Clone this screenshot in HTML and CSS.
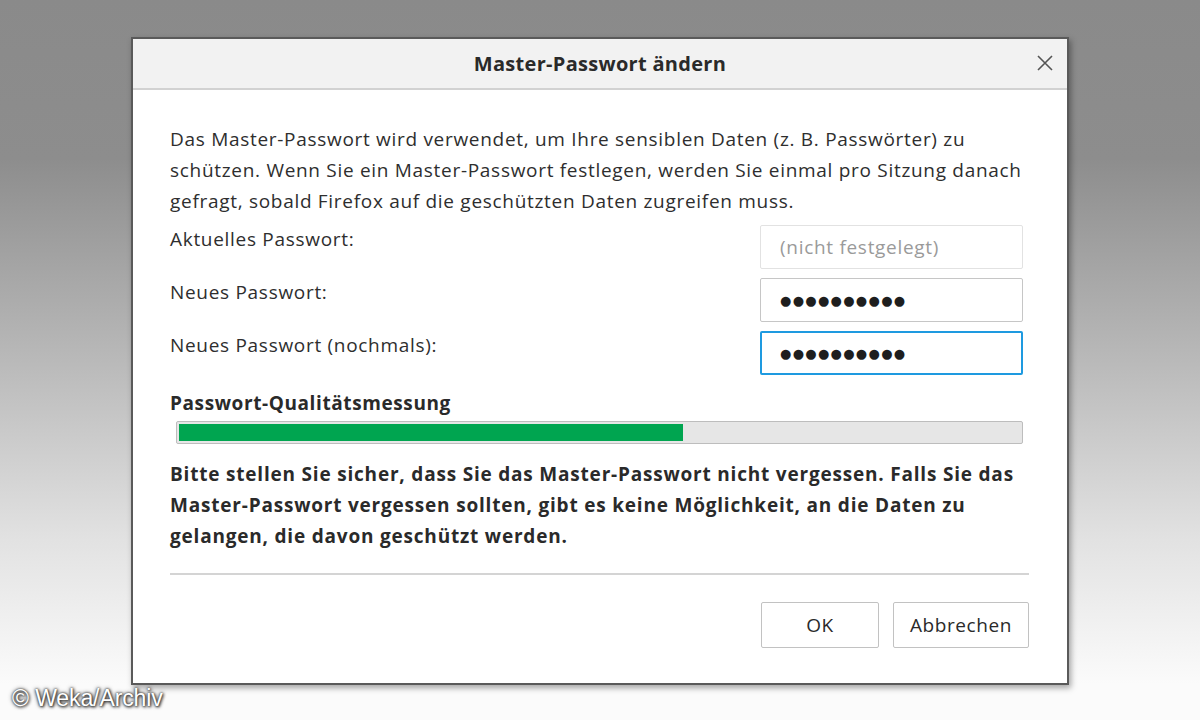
FILE: index.html
```
<!DOCTYPE html>
<html lang="de">
<head>
    <meta charset="UTF-8">
    <title>Master-Passwort ändern</title>
    <link rel="stylesheet" href="styles.css">
</head>
<body>
    <div class="dialog">
        <div class="titlebar">
            <h1>Master-Passwort ändern</h1>
            <span class="close">
                <svg width="18" height="18" viewBox="0 0 18 18"><path d="M2 2 L16 16 M16 2 L2 16" stroke="#555" stroke-width="1.6" fill="none"/></svg>
            </span>
        </div>

        <div class="content">
            <p class="intro">Das Master-Passwort wird verwendet, um Ihre sensiblen Daten (z. B. Passwörter) zu<br>schützen. Wenn Sie ein Master-Passwort festlegen, werden Sie einmal pro Sitzung danach<br>gefragt, sobald Firefox auf die geschützten Daten zugreifen muss.</p>

            <div class="fields">
                <label>Aktuelles Passwort:</label>
                <div class="field disabled">(nicht festgelegt)</div>
                <label>Neues Passwort:</label>
                <div class="field dots">●●●●●●●●●●</div>
                <label>Neues Passwort (nochmals):</label>
                <div class="field dots focused">●●●●●●●●●●</div>
            </div>

            <h2>Passwort-Qualitätsmessung</h2>
            <div class="meter"><div class="meter-fill" style="width: 59.9%"></div></div>

            <p class="warning">Bitte stellen Sie sicher, dass Sie das Master-Passwort nicht vergessen. Falls Sie das<br>Master-Passwort vergessen sollten, gibt es keine Möglichkeit, an die Daten zu<br>gelangen, die davon geschützt werden.</p>

            <div class="separator"></div>

            <div class="buttons">
                <button class="btn-ok">OK</button>
                <button class="btn-cancel">Abbrechen</button>
            </div>
        </div>
    </div>

    <div class="credit">© Weka/Archiv</div>
</body>
</html>
```

FILE: styles.css
```
* {
    margin: 0;
    padding: 0;
    box-sizing: border-box;
}

html, body {
    height: 100%;
}

body {
    font-family: 'Open Sans', 'Noto Sans', sans-serif;
    color: #2b2b2b;
    background: linear-gradient(#8a8a8a 0%, #8d8d8d 22%, #b9b9b9 50%, #e2e2e2 75%, #fbfbfb 95%);
    padding-top: 37px;
    overflow: hidden;
    position: relative;
}

.dialog {
    width: 938px;
    height: 648px;
    margin: 0 0 0 131px;
    background: #fff;
    border: 2px solid #5a5a5a;
    box-shadow: 2px 3px 6px rgba(0, 0, 0, 0.35);
}

.titlebar {
    height: 51px;
    background: #f2f2f2;
    border-bottom: 2px solid #d2d2d2;
    display: flex;
    align-items: center;
    justify-content: center;
    position: relative;
}

h1 {
    font-size: 20px;
    font-weight: 700;
    color: #2a2a2a;
    letter-spacing: 0.3px;
}

.close {
    position: absolute;
    right: 13px;
    top: 15px;
    width: 18px;
    height: 18px;
}

.content {
    padding: 34px 38px 0 37px;
}

.intro {
    font-size: 19px;
    line-height: 31px;
    letter-spacing: 0.7px;
    color: #2e2e2e;
}

.fields {
    display: grid;
    grid-template-columns: 1fr 263px;
    row-gap: 9px;
    margin-top: 8px;
    padding-right: 6px;
}

.fields label {
    font-size: 19px;
    line-height: 24px;
    letter-spacing: 0.7px;
    color: #2e2e2e;
    padding-top: 2px;
}

.field {
    height: 44px;
    border: 1px solid #c6c6c6;
    border-radius: 2px;
    padding: 0 0 0 19px;
    display: flex;
    align-items: center;
    font-size: 19px;
    letter-spacing: 0.7px;
}

.field.disabled {
    border-color: #e2e2e2;
    color: #9a9a9a;
}

.field.dots {
    font-family: 'DejaVu Sans', sans-serif;
    font-size: 13px;
    letter-spacing: 1.3px;
    color: #1e1e1e;
}

.field.focused {
    border: 2px solid #1e9ae0;
    padding-left: 18px;
}

h2 {
    font-size: 19px;
    font-weight: 700;
    color: #2a2a2a;
    margin-top: 15px;
    line-height: 26px;
    letter-spacing: 0.6px;
}

.meter {
    height: 23px;
    margin: 5px 6px 0 6px;
    background: #e6e6e6;
    border: 1px solid #bdbdbd;
    border-radius: 2px;
    padding: 2px;
}

.meter-fill {
    height: 100%;
    background: #00a550;
}

.warning {
    font-size: 19px;
    font-weight: 700;
    line-height: 31px;
    color: #2a2a2a;
    margin-top: 15px;
    letter-spacing: 0.8px;
}

.separator {
    height: 2px;
    background: #d4d4d4;
    margin-top: 21px;
}

.buttons {
    display: flex;
    justify-content: flex-end;
    gap: 14px;
    margin-top: 27px;
}

button {
    height: 46px;
    border: 1px solid #c2c2c2;
    border-radius: 2px;
    background: #fff;
    font-family: 'Open Sans', 'Noto Sans', sans-serif;
    font-size: 19px;
    letter-spacing: 0.6px;
    color: #2a2a2a;
}

.btn-ok {
    width: 118px;
}

.btn-cancel {
    width: 136px;
}

.credit {
    position: absolute;
    left: 12px;
    bottom: 8px;
    font-family: 'Liberation Sans', Arial, sans-serif;
    font-size: 23px;
    color: #fff;
    letter-spacing: -0.1px;
    text-shadow: 0 0 2px #333, 0 0 4px #444, 1px 1px 3px #222;
}
```
